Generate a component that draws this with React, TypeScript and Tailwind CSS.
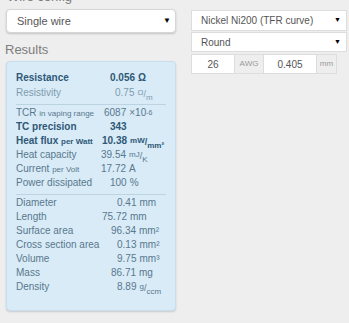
import React from "react";

type Row = {
  label: React.ReactNode;
  num: string;
  unit?: React.ReactNode;
  ml: string;
  bold?: boolean;
  light?: boolean;
};

const Frac = ({ a, b }: { a: string; b: string }) => (
  <span className="inline-flex items-start text-[8px] leading-none">
    <span className="relative top-[-1px]">{a}</span>
    <span className="text-[9px]">/</span>
    <span className="relative top-[4px]">{b}</span>
  </span>
);

const rowsA: Row[] = [
  { label: "Resistance", num: "0.056", unit: "Ω", ml: "ml-[10px]", bold: true },
  { label: "Resistivity", num: "0.75", unit: <Frac a="Ω" b="m" />, ml: "ml-[15px]", light: true },
];

const rowsB: Row[] = [
  {
    label: (
      <>
        TCR <span className="text-[8px]">in vaping range</span>
      </>
    ),
    num: "6087",
    unit: (
      <>
        ×10<sup className="text-[7px] relative top-[-1px]">-6</sup>
      </>
    ),
    ml: "ml-[4px]",
  },
  { label: "TC precision", num: "343", ml: "ml-[10px]", bold: true },
  {
    label: (
      <>
        Heat flux <span className="text-[8px]">per Watt</span>
      </>
    ),
    num: "10.38",
    unit: <Frac a="mW" b="mm²" />,
    ml: "ml-[2px]",
    bold: true,
  },
  { label: "Heat capacity", num: "39.54", unit: <Frac a="mJ" b="K" />, ml: "ml-[1px]" },
  {
    label: (
      <>
        Current <span className="text-[8px]">per Volt</span>
      </>
    ),
    num: "17.72",
    unit: "A",
    ml: "ml-[1px]",
  },
  { label: "Power dissipated", num: "100", unit: "%", ml: "ml-[10px]" },
];

const rowsC: Row[] = [
  { label: "Diameter", num: "0.41", unit: "mm", ml: "ml-[17px]" },
  { label: "Length", num: "75.72", unit: "mm", ml: "ml-[2px]" },
  { label: "Surface area", num: "96.34", unit: "mm²", ml: "ml-[11px]" },
  { label: "Cross section area", num: "0.13", unit: "mm²", ml: "ml-[17px]" },
  { label: "Volume", num: "9.75", unit: "mm³", ml: "ml-[17px]" },
  { label: "Mass", num: "86.71", unit: "mg", ml: "ml-[11px]" },
  { label: "Density", num: "8.89", unit: <Frac a="g" b="ccm" />, ml: "ml-[17px]" },
];

function ResultRow({ r }: { r: Row }) {
  const color = r.bold ? "text-[#2f5877]" : r.light ? "text-[#7f9bb1]" : "text-[#58788f]";
  return (
    <div className={`flex h-[14px] items-center text-[10px] leading-[14px] ${color} ${r.bold ? "font-bold" : ""}`}>
      <div className="w-[84px] shrink-0 whitespace-nowrap">{r.label}</div>
      <div className="flex items-center whitespace-nowrap">
        <span className={r.ml}>{r.num}</span>
        {r.unit !== undefined && <span className="ml-[3px]">{r.unit}</span>}
      </div>
    </div>
  );
}

function Sep() {
  return <div className="mt-[4px] mb-px h-px w-[150px] bg-[#bcd3e2]" />;
}

export default function App() {
  return (
    <div
      className="flex h-[323px] w-[349px] overflow-hidden bg-[#eeeeee]"
      style={{ fontFamily: "'Liberation Sans', Arial, sans-serif" }}
    >
      {/* Left column */}
      <div className="ml-[6px] flex w-[170px] flex-col">
        <div className="mt-[-10px] h-[14px] text-[13px] leading-[14px] text-[#7a7a7a] pl-px">Wire config</div>
        <div className="mt-[5px] flex h-[24px] items-center justify-between rounded-[4px] border border-[#d6d6d6] bg-white pl-[10px] pr-[4px] text-[11px] text-[#555] shadow-[0_1px_2px_rgba(0,0,0,0.18)]">
          <span>Single wire</span>
          <span className="text-[8px] text-black">▼</span>
        </div>
        <div className="mt-[9px] h-[16px] text-[13px] leading-[16px] text-[#7d7d7d] ml-[-1px]">Results</div>
        <div className="mt-[3px] rounded-[4px] border border-[#c5dfee] bg-[#d8ebf6] pl-[9px] pt-[9px] pb-[16px] shadow-[0_1px_2px_rgba(0,0,0,0.15)]">
          <ResultRow r={rowsA[0]} />
          <div className="mt-px">
            <ResultRow r={rowsA[1]} />
          </div>
          <Sep />
          {rowsB.map((r, i) => (
            <ResultRow key={i} r={r} />
          ))}
          <Sep />
          {rowsC.map((r, i) => (
            <ResultRow key={i} r={r} />
          ))}
        </div>
      </div>

      {/* Right column */}
      <div
        className="ml-[15px] mt-[10px] flex w-[156px] flex-col text-[10px] text-[#555]"
        style={{ fontFamily: "'Liberation Sans Narrow', 'Liberation Sans', Arial, sans-serif" }}
      >
        <div className="flex h-[21px] items-center justify-between border border-[#dddddd] bg-white pl-[9px] pr-[5px]">
          <span>Nickel Ni200 (TFR curve)</span>
          <span className="text-[7px] text-black">▼</span>
        </div>
        <div className="mt-px flex h-[20px] items-center justify-between border border-[#dddddd] bg-white pl-[9px] pr-[5px]">
          <span>Round</span>
          <span className="text-[7px] text-black">▼</span>
        </div>
        <div className="mt-[2px] flex h-[20px] w-[146px]">
          <div className="flex w-[44px] items-center justify-center border border-[#dddddd] bg-white">26</div>
          <div className="flex w-[28px] items-center justify-center border-y border-[#dddddd] bg-[#eeeeee] text-[8px] text-[#9a9a9a]">
            AWG
          </div>
          <div className="flex w-[54px] items-center justify-center border border-[#dddddd] bg-white">0.405</div>
          <div className="flex w-[20px] items-center justify-center border-y border-r border-[#dddddd] bg-[#eeeeee] text-[8px] text-[#9a9a9a]">
            mm
          </div>
        </div>
      </div>
    </div>
  );
}
